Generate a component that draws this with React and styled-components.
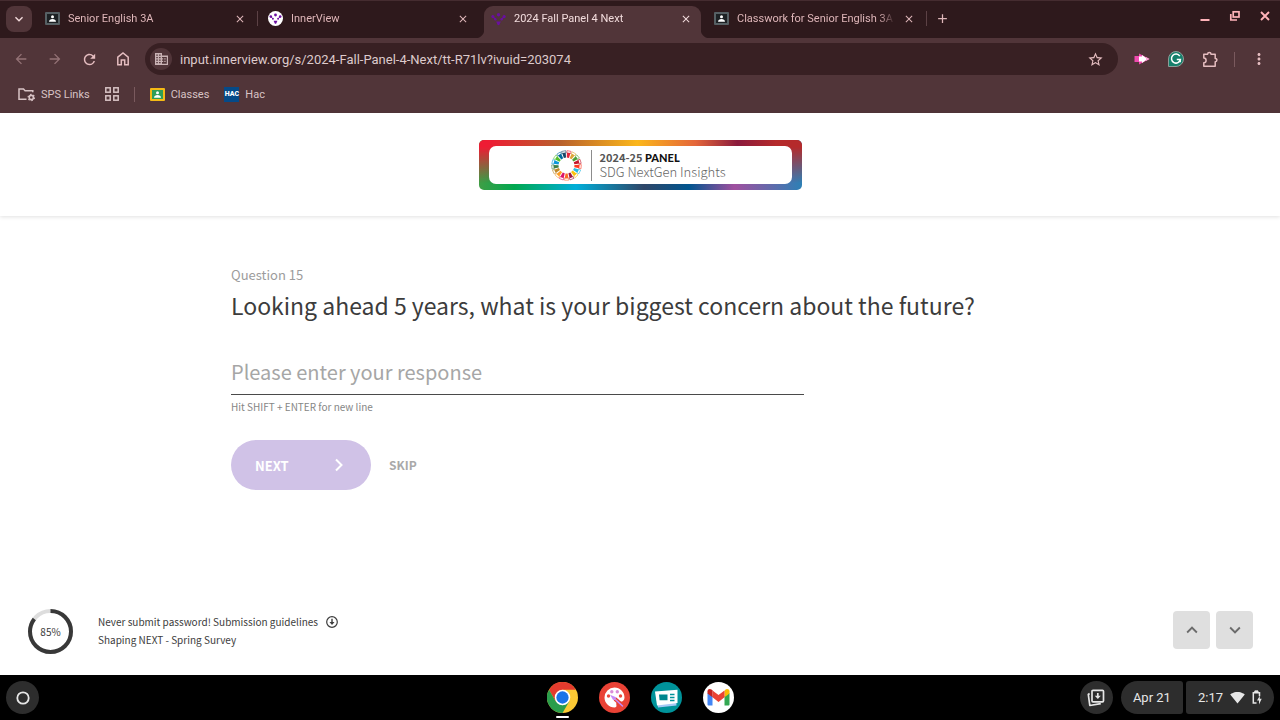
import React from 'react';
import styled, { createGlobalStyle, css } from 'styled-components';
import {
  MdAdd,
  MdArrowBack,
  MdArrowForward,
  MdClose,
  MdExpandLess,
  MdExpandMore,
  MdMoreVert,
  MdRefresh,
  MdSignalWifi4Bar,
  MdStarBorder,
} from 'react-icons/md';

const uiFont = "Roboto, 'Liberation Sans', sans-serif";
const pageFont = "'Noto Sans CJK SC', 'Open Sans', sans-serif";

const GlobalStyle = createGlobalStyle`
  *, *::before, *::after {
    box-sizing: border-box;
  }

  body {
    margin: 0;
    background-color: #000000;
  }

  button {
    font: inherit;
    color: inherit;
    padding: 0;
    border: none;
    background: none;
    cursor: pointer;
  }

  svg {
    display: block;
    flex-shrink: 0;
  }
`;

const Screen = styled.div`
  display: flex;
  flex-direction: column;
  min-height: 100vh;
  font-family: ${uiFont};
`;

/* ---------- browser window ---------- */

const TabStrip = styled.div`
  display: flex;
  align-items: stretch;
  height: 38px;
  padding-left: 6px;
  background-color: #2e191c;
  border-top: 1px solid #452c30;
  color: #dfb6b9;
`;

const TabSearch = styled.button`
  display: flex;
  align-items: center;
  justify-content: center;
  width: 26px;
  height: 26px;
  margin: 5px 3px 0 0;
  border-radius: 8px;
  background-color: #513539;
  color: #f4dcdd;
`;

const Tab = styled.div`
  position: relative;
  flex: 0 1 223px;
  min-width: 0;
  display: flex;
  align-items: center;
  gap: 8px;
  padding: 0 12px 2px 10px;
  font-size: 11px;

  ${({ $active }) =>
    $active &&
    css`
      z-index: 1;
      color: #f2dcdd;

      &::before {
        content: '';
        position: absolute;
        z-index: -1;
        inset: 5px 3px 0;
        border-radius: 9px 9px 0 0;
        background-color: #513539;
      }

      &::after {
        content: '';
        position: absolute;
        z-index: -1;
        inset: auto -6px 0;
        height: 9px;
        background:
          radial-gradient(circle at 0 0, transparent 9px, #513539 10px) left / 9px 9px no-repeat,
          radial-gradient(circle at 100% 0, transparent 9px, #513539 10px) right / 9px 9px no-repeat;
      }
    `}
`;

const TabTitle = styled.span`
  flex: 1;
  min-width: 0;
  overflow: hidden;
  white-space: nowrap;
  mask-image: linear-gradient(to left, transparent, #000 16px);
`;

const TabClose = styled.button`
  display: flex;
`;

const Separator = styled.span`
  width: 1px;
  height: 15px;
  background-color: ${({ $color }) => $color || '#5c4145'};
`;

const TabEnd = styled(Separator)`
  position: absolute;
  right: 0;
  top: 10px;
`;

const NewTab = styled.button`
  display: flex;
  align-items: center;
  justify-content: center;
  width: 30px;
  padding-bottom: 2px;
`;

const WindowButtons = styled.div`
  display: flex;
  gap: 18px;
  margin: 9px 9px 0 auto;
  color: #ffb3b9;

  button {
    height: 12px;
  }
`;

const Toolbar = styled.div`
  display: flex;
  align-items: center;
  height: 42px;
  padding: 0 12px 0 13px;
  background-color: #513539;
  color: #e5bdc0;
`;

const NavButtons = styled.div`
  display: flex;
  gap: 18px;
  margin-right: 15px;
`;

const IconButton = styled.button`
  display: flex;
  opacity: ${({ $dim }) => ($dim ? 0.45 : 1)};
`;

const Omnibox = styled.div`
  flex: 1;
  display: flex;
  align-items: center;
  height: 32px;
  padding: 0 14px 0 5px;
  border-radius: 16px;
  background-color: #382023;
`;

const SiteInfo = styled.button`
  display: flex;
  align-items: center;
  justify-content: center;
  width: 22px;
  height: 22px;
  margin-right: 8px;
  border-radius: 50%;
  background-color: #513539;
`;

const Address = styled.input`
  flex: 1;
  min-width: 0;
  padding: 0;
  border: none;
  outline: none;
  background: none;
  font-family: ${uiFont};
  font-size: 13px;
  color: #ddcacb;
`;

const Extensions = styled.div`
  display: flex;
  align-items: center;
  gap: 18px;
  margin-left: 16px;
`;

const MenuSeparator = styled(Separator)`
  margin: 0 -3px;
`;

const BookmarkBar = styled.nav`
  display: flex;
  align-items: center;
  gap: 15px;
  height: 33px;
  padding: 0 18px 5px;
  background-color: #513539;
  font-size: 11px;
  color: #d8c3c5;
`;

const Bookmark = styled.a`
  display: flex;
  align-items: center;
  gap: 6px;
  color: inherit;
  text-decoration: none;
`;

const HacIcon = styled.span`
  width: 15px;
  height: 15px;
  background-color: #054a88;
  color: #ffffff;
  font: 900 7px/15px ${uiFont};
  text-align: center;
`;

/* ---------- survey page ---------- */

const Page = styled.div`
  flex: 1;
  display: flex;
  flex-direction: column;
  background-color: #ffffff;
  font-family: ${pageFont};
  color: #3c3c3c;
`;

const PageHeader = styled.header`
  display: flex;
  justify-content: center;
  padding: 27px 16px 26px;
  box-shadow: 0 1px 4px rgba(0, 0, 0, 0.12);
`;

const Banner = styled.div`
  position: relative;
  width: 323px;
  padding: 6px 10px;
  border-radius: 5px;
  overflow: hidden;
  background: linear-gradient(
    to right,
    #3f9e45,
    #00a850 11%,
    #00aed9 30%,
    #2f4668 51%,
    #00558f 65%,
    #a0509f 79%,
    #2d80b5
  );

  &::before {
    content: '';
    position: absolute;
    inset: 0;
    background: linear-gradient(
      to right,
      #ee1c34 3%,
      #b8602c 25%,
      #fbb71b 49%,
      #e4663a 67%,
      #8a1a3c 80%,
      #b52a2b 92%
    );
    mask-image: linear-gradient(to bottom, #000 14%, transparent 86%);
  }
`;

const BannerInner = styled.div`
  position: relative;
  display: flex;
  align-items: center;
  height: 38px;
  padding-left: 62px;
  border-radius: 7px;
  background-color: #ffffff;
`;

const BannerText = styled.div`
  margin-left: 9px;
  padding-left: 8px;
  border-left: 1px solid #8c8c8c;
`;

const BannerYear = styled.div`
  font-size: 11px;
  font-weight: 700;
  line-height: 15px;
  color: #555555;

  strong {
    font-family: Lato, sans-serif;
    font-weight: 900;
    color: #111111;
  }
`;

const BannerName = styled.div`
  padding-bottom: 3px;
  font-size: 13px;
  font-weight: 300;
  line-height: 13px;
  color: #666666;
`;

const Survey = styled.main`
  flex: 1;
  width: 100%;
  max-width: 850px;
  margin: 0 auto;
  padding: 47px 16px 24px;
`;

const Step = styled.div`
  font-size: 13px;
  line-height: 23px;
  color: #9c9c9c;
`;

const Question = styled.label`
  display: block;
  font-size: 23px;
  line-height: 38px;
`;

const Answer = styled.textarea`
  display: block;
  width: 70%;
  height: 44px;
  margin-top: 27px;
  padding: 0;
  border: none;
  border-bottom: 1px solid #4a4a4a;
  outline: none;
  resize: none;
  overflow: hidden;
  background: none;
  font-family: ${pageFont};
  font-size: 20px;
  line-height: 42px;

  &::placeholder {
    color: #a6a6a6;
    opacity: 1;
  }
`;

const Hint = styled.p`
  margin: 3px 0 24px;
  font-size: 10px;
  line-height: 18px;
  color: #868686;
`;

const Actions = styled.div`
  display: flex;
  align-items: center;
  gap: 18px;
`;

const NextButton = styled.button`
  display: flex;
  align-items: center;
  justify-content: space-between;
  width: 140px;
  height: 50px;
  padding: 0 26px 0 24px;
  border-radius: 25px;
  background-color: #d0c2e7;
  font-size: 13px;
  font-weight: 700;
  color: #ffffff;
`;

const SkipButton = styled.button`
  font-size: 12px;
  font-weight: 700;
  line-height: 18px;
  color: #a9a9a9;
`;

const PageFooter = styled.footer`
  display: flex;
  align-items: center;
  padding: 0 27px 21px 28px;
`;

const Progress = styled.div`
  display: grid;
  place-items: center;
  margin-right: 25px;
  font-size: 10px;

  > * {
    grid-area: 1 / 1;
  }
`;

const FooterText = styled.div`
  padding-bottom: 2px;
  font-size: 10px;
  line-height: 18px;
`;

const FooterLine = styled.div`
  display: flex;
  align-items: center;
  gap: 8px;
`;

const Pager = styled.div`
  display: flex;
  gap: 6px;
  margin: 0 0 4px auto;
`;

const PagerButton = styled.button`
  display: flex;
  align-items: center;
  justify-content: center;
  width: 37px;
  height: 38px;
  border-radius: 4px;
  background-color: #dfdfdf;
  color: #6b6b6b;
`;

/* ---------- system shelf ---------- */

const Shelf = styled.div`
  display: grid;
  grid-template-columns: 1fr auto 1fr;
  align-items: center;
  height: 45px;
  padding: 0 6px;
  background-color: #000000;
  color: #e6e6e6;
`;

const RoundButton = styled.button`
  display: flex;
  align-items: center;
  justify-content: center;
  width: 33px;
  height: 33px;
  border-radius: 50%;
  background-color: #2d2d2d;
`;

const Apps = styled.div`
  display: flex;
  gap: 21px;
`;

const AppButton = styled.button`
  position: relative;

  ${({ $running }) =>
    $running &&
    css`
      &::after {
        content: '';
        position: absolute;
        left: 9px;
        bottom: -5px;
        width: 13px;
        height: 2px;
        border-radius: 1px;
        background-color: #ffffff;
      }
    `}
`;

const Tray = styled.div`
  display: flex;
  justify-content: flex-end;
  gap: 3px;

  ${RoundButton} {
    margin-right: 5px;
  }
`;

const Pill = styled.button`
  display: flex;
  align-items: center;
  gap: 7px;
  height: 33px;
  padding: 0 12px;
  border-radius: ${({ $end }) => ($end ? '3px 17px 17px 3px' : '17px 3px 3px 17px')};
  background-color: #2d2d2d;
  font-size: 13px;
`;

/* ---------- drawings ---------- */

const ClassroomIcon = ({ frame, board }) => (
  <svg width="15" height="15" viewBox="0 0 15 15" aria-hidden="true">
    <rect x="0" y="1" width="15" height="13" rx="1" fill={frame} />
    <rect x="2" y="3" width="11" height="9" fill={board} />
    <circle cx="7.5" cy="5.8" r="1.5" fill="#ffffff" />
    <path d="M4 10.7c0-2 1.7-2.8 3.5-2.8s3.5.8 3.5 2.8z" fill="#ffffff" />
  </svg>
);

const InnerViewIcon = ({ plain }) => (
  <svg width="15" height="15" viewBox="0 0 15 15" aria-hidden="true">
    {!plain && <circle cx="7.5" cy="7.5" r="7.5" fill="#ffffff" />}
    <g transform={plain ? 'translate(-1.5 -1.1) scale(1.2)' : undefined} fill="#6a0fa0">
      <circle cx="7.5" cy="4" r="1.4" />
      <circle cx="2.8" cy="5.6" r="1.3" />
      <circle cx="12.2" cy="5.6" r="1.3" />
      <circle cx="4.9" cy="7.8" r="1" />
      <circle cx="10.1" cy="7.8" r="1" />
      <path d="M5.6 9.7l3.8 0-1 2.5q-.9 1-1.8 0z" />
      <path d="M2.8 5.6l2.1 2.2M12.2 5.6l-2.1 2.2" stroke="#6a0fa0" strokeWidth="1" />
    </g>
  </svg>
);

const HomeIcon = () => (
  <svg width="14" height="16" viewBox="0 0 14 16" fill="none" stroke="currentColor" strokeWidth="1.5" aria-hidden="true">
    <path d="M1.8 6.2L7 2l5.2 4.2v7.600H8.700V9H5.300v4.800H1.800z" />
  </svg>
);

const BuildingIcon = () => (
  <svg width="13" height="12" viewBox="0 0 13 12" fill="#c9b2b4" aria-hidden="true">
    <path
      fillRule="evenodd"
      d="M0 0h7v2.500h6V12H0zM1.300 1.500v1.200h1.500V1.500zm2.800 0v1.200h1.500V1.500zM1.300 4v1.200h1.500V4zm2.800 0v1.200h1.500V4zM1.300 6.500v1.200h1.500V6.500zm2.800 0v1.200h1.500V6.500zM1.300 9v1.300h1.500V9zm2.800 0v1.300h1.500V9zM7 4v1.200h1.200v1.300H7v1.200h1.200V9H7v1.800h4.800V4zm2.300 1.300h1.300v1.200H9.300zm0 2.500h1.300V9H9.300z"
    />
  </svg>
);

const FolderGearIcon = () => (
  <svg width="17" height="15" viewBox="0 0 17 15" fill="none" stroke="#d8c3c5" aria-hidden="true">
    <path d="M8.5 12.200H1V2h4.500l1.600 1.700h7.700v1.500" strokeWidth="1.5" />
    <circle cx="13.3" cy="10.500" r="2.1" strokeWidth="1.6" />
    <circle cx="13.3" cy="10.500" r="3.2" strokeWidth="1.2" strokeDasharray="1.500 1.850" />
  </svg>
);

const AppsGridIcon = () => (
  <svg width="14" height="14" viewBox="0 0 14 14" fill="none" stroke="#d8c3c5" strokeWidth="1.5" aria-hidden="true">
    {[0.8, 8.8].map((x) =>
      [0.8, 8.8].map((y) => <rect key={`${x}-${y}`} x={x} y={y} width="4.4" height="4.4" />)
    )}
  </svg>
);

const CastIcon = () => (
  <svg width="16" height="14" viewBox="0 0 16 14" aria-hidden="true">
    <path d="M.5 4H5V1.500L15.500 7 5 12.500V10H.5z" fill="#f04bb0" />
    <path d="M5 4.500h3V3l5.500 4L8 11V9.500H5z" fill="#ffffff" />
    <path d="M12 5l3.500 2L12 9z" fill="#f9a8d6" />
  </svg>
);

const GrammarlyIcon = () => (
  <svg width="16" height="16" viewBox="0 0 16 16" aria-hidden="true">
    <path d="M8 .5a7.500 7.500 0 1 1 0 15H.5V8A7.500 7.500 0 0 1 8 .5z" fill="#15806c" stroke="#8d9c98" />
    <path
      d="M11.800 5.200A4.500 4.500 0 1 0 12.400 8.500H8.800M12.200 8.500v2.800"
      fill="none"
      stroke="#ffffff"
      strokeWidth="1.5"
    />
  </svg>
);

const PuzzleIcon = () => (
  <svg width="17" height="17" viewBox="0 0 17 17" fill="none" stroke="#e5bdc0" strokeWidth="1.5" aria-hidden="true">
    <path
      d="M1.800 3.200h3.800a1.700 1.700 0 0 1 3.400 0h4.200v4.200a1.700 1.700 0 0 1 0 3.400v4.400H1.800v-3.500a2.200 2.200 0 0 0 0-4.600z"
      strokeLinejoin="round"
    />
  </svg>
);

const sdgColors = [
  '#e5243b', '#dda63a', '#4c9f38', '#c5192d', '#ff3a21', '#26bde2', '#fcc30b', '#a21942', '#fd6925',
  '#dd1367', '#fd9d24', '#bf8b2e', '#3f7e44', '#0a97d9', '#56c02b', '#00689d', '#19486a',
];

const SdgWheel = () => (
  <svg width="31" height="31" viewBox="-15.5 -15.5 31 31" role="img" aria-label="SDG wheel">
    {sdgColors.map((color, i) => (
      <g key={color} transform={`rotate(${(i * 360) / 17 + 10})`}>
        <path d="M-1.1-7.900L-1.800-13H1.800L1.100-7.900z" fill={color} />
        <path d="M-1.900-12.200L-2.100-14.700H2.100L1.900-12.200" fill="none" stroke={color} strokeWidth="0.8" opacity="0.7" />
      </g>
    ))}
  </svg>
);

const ProgressRing = ({ percent }) => {
  const length = 2 * Math.PI * 20.5;
  return (
    <svg width="45" height="45" viewBox="0 0 45 45" fill="none" strokeWidth="4" aria-hidden="true">
      <circle cx="22.5" cy="22.5" r="20.5" stroke="#dddddd" />
      <circle
        cx="22.5"
        cy="22.5"
        r="20.5"
        stroke="#383838"
        strokeDasharray={`${(length * percent) / 100} ${length}`}
        transform="rotate(-90 22.5 22.5)"
      />
    </svg>
  );
};

const DownCircleIcon = () => (
  <svg width="12" height="12" viewBox="0 0 12 12" fill="none" stroke="#3c3c3c" aria-hidden="true">
    <circle cx="6" cy="6" r="5.3" strokeWidth="1.2" />
    <path d="M6 2.800v4.500" strokeWidth="1.4" />
    <path d="M3.500 6h5L6 9z" fill="#3c3c3c" stroke="none" />
  </svg>
);

const ChromeLogo = () => (
  <svg width="31" height="31" viewBox="0 0 48 48">
    <circle cx="24" cy="24" r="24" fill="#fbc934" />
    <path d="M24 24L13.600 30 3.200 12A24 24 0 0 1 44.800 12H24z" fill="#e33b2e" />
    <path d="M24 36L34.400 30 24 48A24 24 0 0 1 3.200 12L13.600 30z" fill="#2a9d4b" />
    <circle cx="24" cy="24" r="12" fill="#ffffff" />
    <circle cx="24" cy="24" r="9.5" fill="#1a73e8" />
  </svg>
);

const CanvasLogo = () => (
  <svg width="31" height="31" viewBox="0 0 31 31">
    <circle cx="15.5" cy="15.5" r="15.5" fill="#e94235" />
    <path
      d="M15.500 5.500a10 10 0 0 0-10 10c0 5.500 4.500 10 10 10 1.600 0 2.300-1.200 1.900-2.400-.7-2 .4-3.300 2.200-3.300h2c2.300 0 3.900-1.800 3.900-4.300 0-5.500-4.500-10-10-10z"
      fill="#ffffff"
    />
    <circle cx="9.5" cy="14" r="1.7" fill="#ea4a3f" />
    <circle cx="12.8" cy="9.8" r="1.7" fill="#d98bd8" />
    <circle cx="18.3" cy="9.8" r="1.7" fill="#d98bd8" />
    <circle cx="21.5" cy="14" r="1.7" fill="#ea4a3f" />
    <path d="M16 17l7.500 6.500" stroke="#e94235" strokeWidth="4" />
    <path
      d="M13 14.500l1.500 2.500 1.500-1.200zM16.500 17.500l7 6.500"
      fill="#c58af9"
      stroke="#c58af9"
      strokeWidth="1.6"
      strokeLinecap="round"
    />
  </svg>
);

const ScreencastLogo = () => (
  <svg width="31" height="31" viewBox="0 0 31 31">
    <circle cx="15.5" cy="15.5" r="15.5" fill="#00939a" />
    <path d="M4.500 10l20 1 1 12.500-18.500 2z" fill="#a6c8f5" />
    <path d="M4 9.500l22.500-1.800V21L6 23.500z" fill="#ffffff" />
    <path d="M8 12.500h8.500v5.800H8.600z" fill="#00868e" />
    <path d="M19 12.500h4.500M19 15.500h4.500M19 18.500h4.500" stroke="#00939a" strokeWidth="1.5" />
  </svg>
);

const GmailLogo = () => (
  <svg width="31" height="31" viewBox="0 0 31 31">
    <circle cx="15.5" cy="15.5" r="15.5" fill="#ffffff" />
    <path d="M4.500 11v11.500q0 1 1 1h4V14z" fill="#4285f4" />
    <path d="M26.500 11v11.500q0 1-1 1h-4V14z" fill="#34a853" />
    <path d="M21.500 9v6.300l5-3.800V9.300c0-2.300-2.500-3-4-1.800z" fill="#fbbc04" />
    <path d="M9.500 15.300V8.500l6 4.500 6-4.500v6.800l-6 4.600z" fill="#ea4335" />
    <path d="M4.500 9.300v2.200l5 3.800V8.500l-1-1c-1.800-1.200-4-.5-4 1.800z" fill="#c5221f" />
  </svg>
);

const HoldingSpaceIcon = () => (
  <svg width="18" height="18" viewBox="0 0 18 18" fill="none" stroke="#e6e6e6" strokeWidth="1.7" aria-hidden="true">
    <rect x="5" y="1.3" width="11.5" height="11.5" rx="1" />
    <path d="M2.600 4.500L1.300 5.500l1.500 11 11-1.800" strokeLinejoin="round" />
    <path d="M10.800 4v3" strokeWidth="1.7" />
    <path d="M7.800 6.800h6l-3 3.300z" fill="#e6e6e6" stroke="none" />
  </svg>
);

const BatteryIcon = () => (
  <svg width="10" height="15" viewBox="0 0 10 15" fill="none" stroke="#e6e6e6" aria-hidden="true">
    <path d="M4.500 13H1.300V2.800h6.200v3.500" strokeWidth="1.5" />
    <path d="M2.800.9h3.200v1.200H2.800z" fill="#e6e6e6" />
    <path d="M7.800 5.800v3h1.900L7 14.500v-4H5z" fill="#e6e6e6" stroke="none" />
  </svg>
);

const darkClassroom = <ClassroomIcon frame="#566064" board="#1d2124" />;

const tabs = [
  { title: 'Senior English 3A', icon: darkClassroom, end: true },
  { title: 'InnerView', icon: <InnerViewIcon /> },
  { title: '2024 Fall Panel 4 Next', icon: <InnerViewIcon plain />, active: true },
  { title: 'Classwork for Senior English 3A', icon: darkClassroom, end: true },
];

const apps = [
  { name: 'Chrome', icon: <ChromeLogo />, running: true },
  { name: 'Canvas', icon: <CanvasLogo /> },
  { name: 'Screencast', icon: <ScreencastLogo /> },
  { name: 'Gmail', icon: <GmailLogo /> },
];

const BrowserTabs = () => (
  <TabStrip>
    <TabSearch aria-label="Search tabs">
      <MdExpandMore size={16} />
    </TabSearch>
    {tabs.map(({ title, icon, active, end }) => (
      <Tab key={title} $active={active}>
        {icon}
        <TabTitle>{title}</TabTitle>
        <TabClose aria-label={`Close ${title}`}>
          <MdClose size={12} />
        </TabClose>
        {end && <TabEnd />}
      </Tab>
    ))}
    <NewTab aria-label="New tab">
      <MdAdd size={15} />
    </NewTab>
    <WindowButtons>
      <button aria-label="Minimize">
        <svg width="12" height="12" viewBox="0 0 12 12" stroke="currentColor" strokeWidth="2">
          <path d="M1.500 10h9" />
        </svg>
      </button>
      <button aria-label="Restore">
        <svg width="12" height="12" viewBox="0 0 12 12" fill="none" stroke="currentColor" strokeWidth="1.7">
          <rect x="4.2" y="1.8" width="5.8" height="5.2" />
          <path d="M1.800 4v6H8" />
        </svg>
      </button>
      <button aria-label="Close window">
        <svg width="12" height="12" viewBox="0 0 12 12" stroke="currentColor" strokeWidth="1.9">
          <path d="M2 2l8 8M10 2l-8 8" />
        </svg>
      </button>
    </WindowButtons>
  </TabStrip>
);

const BrowserToolbar = () => (
  <Toolbar>
    <NavButtons>
      <IconButton $dim aria-label="Back">
        <MdArrowBack size={16} />
      </IconButton>
      <IconButton $dim aria-label="Forward">
        <MdArrowForward size={16} />
      </IconButton>
      <IconButton aria-label="Reload">
        <MdRefresh size={17} />
      </IconButton>
      <IconButton aria-label="Home">
        <HomeIcon />
      </IconButton>
    </NavButtons>
    <Omnibox>
      <SiteInfo aria-label="View site information">
        <BuildingIcon />
      </SiteInfo>
      <Address
        aria-label="Address"
        defaultValue="input.innerview.org/s/2024-Fall-Panel-4-Next/tt-R71lv?ivuid=203074"
      />
      <IconButton aria-label="Bookmark this tab">
        <MdStarBorder size={17} />
      </IconButton>
    </Omnibox>
    <Extensions>
      <IconButton aria-label="Screen cast">
        <CastIcon />
      </IconButton>
      <IconButton aria-label="Grammarly">
        <GrammarlyIcon />
      </IconButton>
      <IconButton aria-label="Extensions">
        <PuzzleIcon />
      </IconButton>
      <MenuSeparator $color="#7a5a5e" />
      <IconButton aria-label="Menu">
        <MdMoreVert size={18} />
      </IconButton>
    </Extensions>
  </Toolbar>
);

const Bookmarks = () => (
  <BookmarkBar>
    <Bookmark href="#sps">
      <FolderGearIcon />
      SPS Links
    </Bookmark>
    <Bookmark href="#apps" aria-label="Apps">
      <AppsGridIcon />
    </Bookmark>
    <Separator $color="#7a5a5e" />
    <Bookmark href="#classes">
      <ClassroomIcon frame="#f5ba15" board="#2f9e58" />
      Classes
    </Bookmark>
    <Bookmark href="#hac">
      <HacIcon aria-hidden="true">HAC</HacIcon>
      Hac
    </Bookmark>
  </BookmarkBar>
);

const SurveyPage = () => (
  <Page>
    <PageHeader>
      <Banner>
        <BannerInner>
          <SdgWheel />
          <BannerText>
            <BannerYear>
              2024-25 <strong>PANEL</strong>
            </BannerYear>
            <BannerName>SDG NextGen Insights</BannerName>
          </BannerText>
        </BannerInner>
      </Banner>
    </PageHeader>
    <Survey>
      <Step>Question 15</Step>
      <Question htmlFor="answer">
        Looking ahead 5 years, what is your biggest concern about the future?
      </Question>
      <Answer id="answer" rows={1} placeholder="Please enter your response" />
      <Hint>Hit SHIFT + ENTER for new line</Hint>
      <Actions>
        <NextButton>
          NEXT
          <svg width="12" height="14" viewBox="0 0 12 14" fill="none" stroke="currentColor" strokeWidth="2">
            <path d="M3 1.500L8.500 7l-5.500 5.500" />
          </svg>
        </NextButton>
        <SkipButton>SKIP</SkipButton>
      </Actions>
    </Survey>
    <PageFooter>
      <Progress>
        <ProgressRing percent={85} />
        <span>85%</span>
      </Progress>
      <FooterText>
        <FooterLine>
          Never submit password! Submission guidelines
          <DownCircleIcon />
        </FooterLine>
        <FooterLine>Shaping NEXT - Spring Survey</FooterLine>
      </FooterText>
      <Pager>
        <PagerButton aria-label="Previous question">
          <MdExpandLess size={22} />
        </PagerButton>
        <PagerButton aria-label="Next question">
          <MdExpandMore size={22} />
        </PagerButton>
      </Pager>
    </PageFooter>
  </Page>
);

const SystemShelf = () => (
  <Shelf>
    <RoundButton aria-label="Launcher">
      <svg width="14" height="14" viewBox="0 0 14 14" fill="none" stroke="#e6e6e6" strokeWidth="1.8">
        <circle cx="7" cy="7" r="5.7" />
      </svg>
    </RoundButton>
    <Apps>
      {apps.map(({ name, icon, running }) => (
        <AppButton key={name} aria-label={name} $running={running}>
          {icon}
        </AppButton>
      ))}
    </Apps>
    <Tray>
      <RoundButton aria-label="Recent files">
        <HoldingSpaceIcon />
      </RoundButton>
      <Pill>Apr 21</Pill>
      <Pill $end>
        2:17
        <MdSignalWifi4Bar size={15} />
        <BatteryIcon />
      </Pill>
    </Tray>
  </Shelf>
);

const App = () => (
  <Screen>
    <GlobalStyle />
    <BrowserTabs />
    <BrowserToolbar />
    <Bookmarks />
    <SurveyPage />
    <SystemShelf />
  </Screen>
);

export default App;
